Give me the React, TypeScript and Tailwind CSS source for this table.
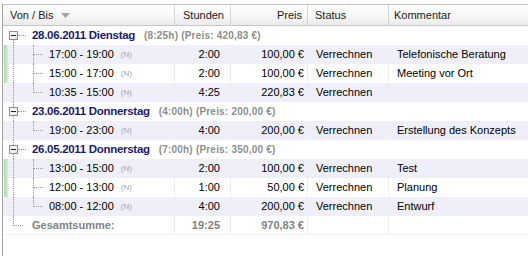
import React from "react";

type Item = {
  time: string;
  hours: string;
  price: string;
  status: string;
  note: string;
  green?: boolean;
};

type Group = {
  date: string;
  sum: string;
  items: Item[];
};

const groups: Group[] = [
  {
    date: "28.06.2011 Dienstag",
    sum: "(8:25h) (Preis: 420,83 €)",
    items: [
      { time: "17:00 - 19:00", hours: "2:00", price: "100,00 €", status: "Verrechnen", note: "Telefonische Beratung", green: true },
      { time: "15:00 - 17:00", hours: "2:00", price: "100,00 €", status: "Verrechnen", note: "Meeting vor Ort", green: true },
      { time: "10:35 - 15:00", hours: "4:25", price: "220,83 €", status: "Verrechnen", note: "" },
    ],
  },
  {
    date: "23.06.2011 Donnerstag",
    sum: "(4:00h) (Preis: 200,00 €)",
    items: [
      { time: "19:00 - 23:00", hours: "4:00", price: "200,00 €", status: "Verrechnen", note: "Erstellung des Konzepts" },
    ],
  },
  {
    date: "26.05.2011 Donnerstag",
    sum: "(7:00h) (Preis: 350,00 €)",
    items: [
      { time: "13:00 - 15:00", hours: "2:00", price: "100,00 €", status: "Verrechnen", note: "Test", green: true },
      { time: "12:00 - 13:00", hours: "1:00", price: "50,00 €", status: "Verrechnen", note: "Planung", green: true },
      { time: "08:00 - 12:00", hours: "4:00", price: "200,00 €", status: "Verrechnen", note: "Entwurf" },
    ],
  },
];

const dot = "border-dotted border-[#9a9a9a]";

const GroupRow = ({ group, first }: { group: Group; first: boolean }) => (
  <div className="flex h-[19px] items-center bg-white">
    <div className="w-[6px] shrink-0" />
    <div className="flex h-full w-[9px] shrink-0 flex-col items-center">
      <div className={`h-[5px] w-0 ${first ? "" : `border-l ${dot}`}`} />
      <div className="flex h-[9px] w-[9px] items-center justify-center border border-[#8f8f8f] bg-gradient-to-br from-white to-[#e4e4e4]">
        <div className="h-[1px] w-[5px] bg-[#222]" />
      </div>
      <div className={`w-0 flex-1 border-l ${dot}`} />
    </div>
    <div className={`h-0 w-[8px] shrink-0 border-t ${dot}`} />
    <div className="w-[6px] shrink-0" />
    <span className="whitespace-nowrap text-[11.5px] font-bold tracking-[-0.3px] text-[#1b1b6f]">{group.date}</span>
    <span className="ml-[9px] whitespace-nowrap text-[10px] font-bold tracking-[0.2px] text-[#8e8e8e]">{group.sum}</span>
  </div>
);

const ChildRow = ({ item, alt, last }: { item: Item; alt: boolean; last: boolean }) => (
  <div className={`flex h-[19px] items-center ${alt ? "bg-[#efeff9]" : "bg-white"}`}>
    <div className="flex h-full w-[172px] shrink-0 items-center border-r border-[#ececf0]">
      <div className="h-full w-[10px] shrink-0 pl-[1px]">
        {item.green && <div className="h-full w-[4px] bg-gradient-to-r from-[#a6dca6] to-[#d6f0d6]" />}
      </div>
      <div className={`h-full w-[20px] shrink-0 border-l ${dot}`} />
      <div className="flex h-full w-[10px] shrink-0 flex-col">
        <div className={`h-[10px] border-b border-l ${dot}`} />
        <div className={`flex-1 ${last ? "" : `border-l ${dot}`}`} />
      </div>
      <div className="w-[6px] shrink-0" />
      <span className="whitespace-nowrap">{item.time}</span>
      <span className="ml-[7px] text-[8px] text-[#a4a4a4]">(N)</span>
    </div>
    <div className="flex h-full w-[56px] shrink-0 items-center justify-end border-r border-[#ececf0] pr-[10px]">{item.hours}</div>
    <div className="flex h-full w-[77px] shrink-0 items-center justify-end border-r border-[#ececf0] pr-[3px] whitespace-nowrap">{item.price}</div>
    <div className="flex h-full w-[81px] shrink-0 items-center border-r border-[#ececf0] pl-[8px]">{item.status}</div>
    <div className="flex h-full flex-1 items-center pl-[8px] whitespace-nowrap">{item.note}</div>
  </div>
);

const TotalRow = () => (
  <div className="flex h-[19px] items-center border-b border-[#f0f0f0] bg-white font-bold text-[#828282]">
    <div className="flex h-full w-[172px] shrink-0 items-center border-r border-[#ececf0]">
      <div className="w-[10px] shrink-0" />
      <div className="flex h-full w-[10px] shrink-0 flex-col">
        <div className={`h-[10px] border-b border-l ${dot}`} />
      </div>
      <div className="w-[9px] shrink-0" />
      <span>Gesamtsumme:</span>
    </div>
    <div className="flex h-full w-[56px] shrink-0 items-center justify-end border-r border-[#ececf0] pr-[10px]">19:25</div>
    <div className="flex h-full w-[77px] shrink-0 items-center justify-end border-r border-[#ececf0] pr-[3px]">970,83 €</div>
    <div className="h-full w-[81px] shrink-0 border-r border-[#ececf0]" />
    <div className="h-full flex-1" />
  </div>
);

const App = () => {
  return (
    <div
      className="h-[256px] w-[528px] overflow-hidden bg-white pt-[4px] text-[11px] text-black"
      style={{ fontFamily: '"Liberation Sans", Arial, sans-serif' }}
    >
      <div className="ml-[2px] h-full border-l border-[#a3a3a3]">
        <div className="flex h-[22px] border-y border-[#c6c6c6] bg-gradient-to-b from-white via-[#f7f7f7] to-[#ebebeb] text-[#1a1a1a]">
          <div className="flex w-[172px] shrink-0 items-center border-r border-[#d6d6d6] pl-[7px]">
            <span>Von / Bis</span>
            <svg width="9" height="5" viewBox="0 0 9 5" className="ml-[8px]">
              <polygon points="0,0 9,0 4.5,5" fill="#a3a3a3" />
            </svg>
          </div>
          <div className="flex w-[56px] shrink-0 items-center border-r border-[#d6d6d6] pl-[8px]">Stunden</div>
          <div className="flex w-[77px] shrink-0 items-center justify-end border-r border-[#d6d6d6] pr-[5px]">Preis</div>
          <div className="flex w-[81px] shrink-0 items-center border-r border-[#d6d6d6] pl-[7px]">Status</div>
          <div className="flex flex-1 items-center pl-[5px]">Kommentar</div>
        </div>
        {groups.map((g, gi) => (
          <React.Fragment key={g.date}>
            <GroupRow group={g} first={gi === 0} />
            {g.items.map((it, i) => (
              <ChildRow key={it.time} item={it} alt={i % 2 === 0} last={i === g.items.length - 1} />
            ))}
          </React.Fragment>
        ))}
        <TotalRow />
      </div>
    </div>
  );
};

export default App;
